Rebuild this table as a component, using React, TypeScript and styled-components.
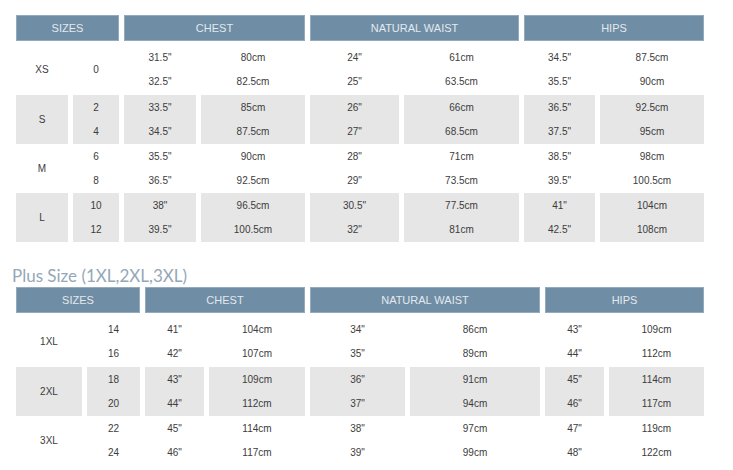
import React from "react";
import styled, { createGlobalStyle } from "styled-components";

const GlobalStyle = createGlobalStyle`
  body {
    margin: 0;
    background: #ffffff;
    font-family: "Liberation Sans", Arial, sans-serif;
  }
`;

const Page = styled.div`
  padding: 15px 0 0 11px;
`;

const Table = styled.table`
  border-collapse: separate;
  border-spacing: 5px 0;
  table-layout: fixed;
  margin: 0;
`;

const HeadCell = styled.th`
  height: 26px;
  padding: 0;
  background: #6f8da4;
  border: 1px solid #93abbd;
  box-sizing: border-box;
  color: #e3e9ee;
  font-size: 11px;
  font-weight: normal;
  text-align: center;
  vertical-align: middle;
`;

const BodyRow = styled.tr<{ $first?: boolean }>`
  td {
    height: ${(p) => (p.$first ? 54 : 49)}px;
    padding-top: ${(p) => (p.$first ? 3 : 0)}px;
  }
`;

const Cell = styled.td<{ $shaded?: boolean }>`
  padding: 0;
  box-sizing: border-box;
  background: ${(p) => (p.$shaded ? "#e6e6e6" : "transparent")};
  color: #3c3c3c;
  font-size: 10px;
  line-height: 24px;
  text-align: center;
  vertical-align: middle;
`;

const Line = styled.div`
  height: 24px;
`;

const Title = styled.h3`
  margin: 24px 0 1px 1px;
  font-family: Lato, "Open Sans", sans-serif;
  font-weight: normal;
  font-size: 17px;
  line-height: 20px;
  color: #94a8b7;
`;

type SizeRow = {
  label: string;
  values: string[][];
  shaded?: boolean;
};

const standard: SizeRow[] = [
  {
    label: "XS",
    values: [["0"], ['31.5"', '32.5"'], ["80cm", "82.5cm"], ['24"', '25"'], ["61cm", "63.5cm"], ['34.5"', '35.5"'], ["87.5cm", "90cm"]],
  },
  {
    label: "S",
    shaded: true,
    values: [["2", "4"], ['33.5"', '34.5"'], ["85cm", "87.5cm"], ['26"', '27"'], ["66cm", "68.5cm"], ['36.5"', '37.5"'], ["92.5cm", "95cm"]],
  },
  {
    label: "M",
    values: [["6", "8"], ['35.5"', '36.5"'], ["90cm", "92.5cm"], ['28"', '29"'], ["71cm", "73.5cm"], ['38.5"', '39.5"'], ["98cm", "100.5cm"]],
  },
  {
    label: "L",
    shaded: true,
    values: [["10", "12"], ['38"', '39.5"'], ["96.5cm", "100.5cm"], ['30.5"', '32"'], ["77.5cm", "81cm"], ['41"', '42.5"'], ["104cm", "108cm"]],
  },
];

const plus: SizeRow[] = [
  {
    label: "1XL",
    values: [["14", "16"], ['41"', '42"'], ["104cm", "107cm"], ['34"', '35"'], ["86cm", "89cm"], ['43"', '44"'], ["109cm", "112cm"]],
  },
  {
    label: "2XL",
    shaded: true,
    values: [["18", "20"], ['43"', '44"'], ["109cm", "112cm"], ['36"', '37"'], ["91cm", "94cm"], ['45"', '46"'], ["114cm", "117cm"]],
  },
  {
    label: "3XL",
    values: [["22", "24"], ['45"', '46"'], ["114cm", "117cm"], ['38"', '39"'], ["97cm", "99cm"], ['47"', '48"'], ["119cm", "122cm"]],
  },
];

const SizeTable: React.FC<{ rows: SizeRow[]; widths: number[] }> = ({ rows, widths }) => (
  <Table>
    <colgroup>
      {widths.map((w, i) => (
        <col key={i} style={{ width: w }} />
      ))}
    </colgroup>
    <thead>
      <tr>
        <HeadCell colSpan={2}>SIZES</HeadCell>
        <HeadCell colSpan={2}>CHEST</HeadCell>
        <HeadCell colSpan={2}>NATURAL WAIST</HeadCell>
        <HeadCell colSpan={2}>HIPS</HeadCell>
      </tr>
    </thead>
    <tbody>
      {rows.map((row, r) => (
        <BodyRow key={row.label} $first={r === 0}>
          <Cell $shaded={row.shaded}>{row.label}</Cell>
          {row.values.map((vals, i) => (
            <Cell key={i} $shaded={row.shaded}>
              {vals.map((v) => (
                <Line key={v}>{v}</Line>
              ))}
            </Cell>
          ))}
        </BodyRow>
      ))}
    </tbody>
  </Table>
);

export default function App() {
  return (
    <Page>
      <GlobalStyle />
      <SizeTable rows={standard} widths={[52, 46, 72, 104, 89, 115, 71, 104]} />
      <Title>Plus Size (1XL,2XL,3XL)</Title>
      <SizeTable rows={plus} widths={[66, 53, 59, 96, 95, 130, 59, 95]} />
    </Page>
  );
}
